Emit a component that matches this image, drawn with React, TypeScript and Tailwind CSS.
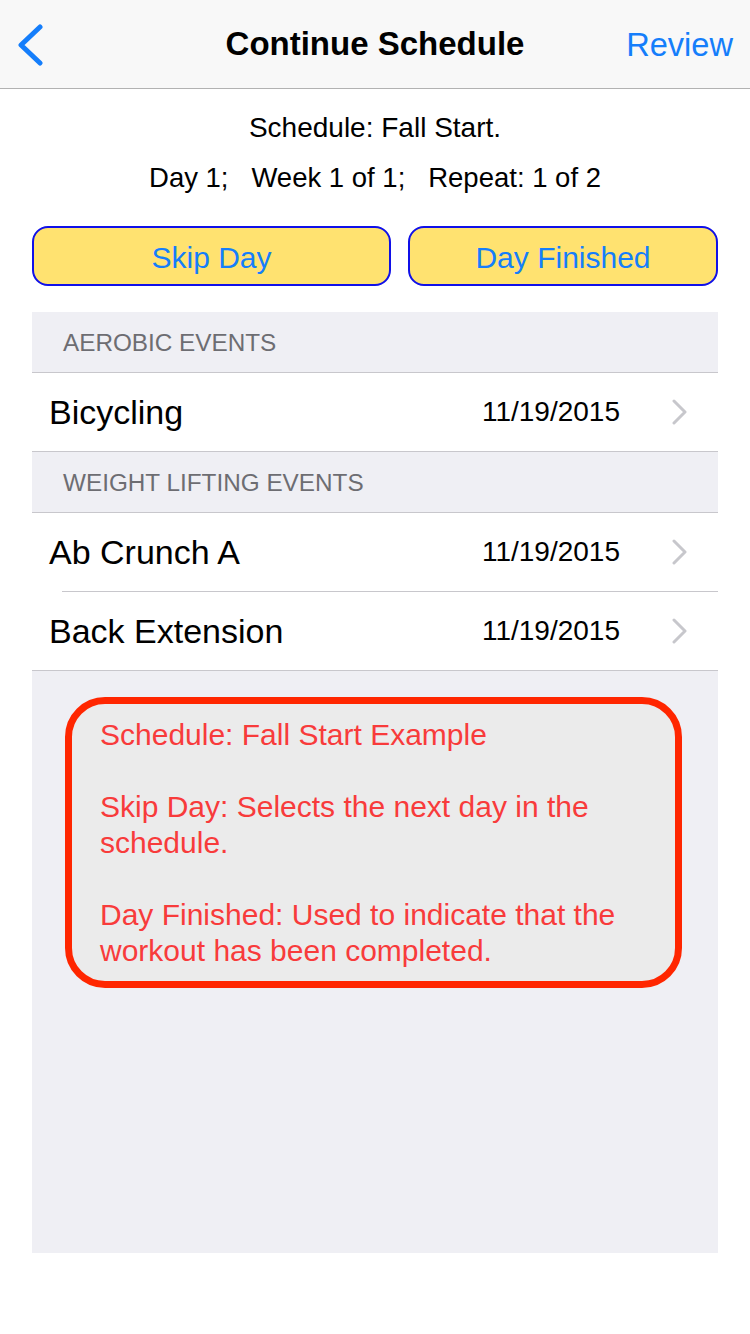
import React from "react";

const font = { fontFamily: '"Liberation Sans", Arial, sans-serif' };

function Chevron() {
  return (
    <svg width="16" height="26" viewBox="0 0 16 26" className="shrink-0">
      <path d="M2 2 L13 13 L2 24" fill="none" stroke="#c7c7cc" strokeWidth="3" strokeLinecap="round" strokeLinejoin="round" />
    </svg>
  );
}

function Row({ name, date, inset }: { name: string; date: string; inset?: boolean }) {
  return (
    <div className="bg-white">
      <div className="h-[78px] flex items-center pl-[17px] pr-[30px]">
        <span className="text-[34px] text-black flex-1">{name}</span>
        <span className="text-[28px] text-black mr-[52px]">{date}</span>
        <Chevron />
      </div>
      {inset ? <div className="ml-[30px] h-px bg-[#c8c7cc]" /> : null}
    </div>
  );
}

function Header({ title }: { title: string }) {
  return (
    <div className="h-[61px] flex items-center pt-[3px] pl-[31px] border-b border-[#c8c7cc]">
      <span className="text-[24.3px] text-[#6d6d72]">{title}</span>
    </div>
  );
}

export default function App() {
  return (
    <div className="w-[750px] h-[1334px] bg-white flex flex-col" style={font}>
      <div className="h-[89px] bg-[#f8f8f8] border-b border-[#b2b2b2] flex items-center relative">
        <svg width="30" height="42" viewBox="0 0 30 42" className="absolute left-[15px] top-[24px]">
          <path d="M25 3 L6 21 L25 39" fill="none" stroke="#157efb" strokeWidth="5" strokeLinecap="round" strokeLinejoin="round" />
        </svg>
        <div className="w-full text-center text-[33px] font-bold text-black">Continue Schedule</div>
        <span className="absolute right-[17px] top-[21px] text-[32.6px] text-[#157efb]">Review</span>
      </div>
      <div className="flex flex-col items-center pt-[22px]">
        <div className="text-[28px] text-black leading-[34px]">Schedule: Fall Start.</div>
        <div className="text-[27.5px] text-black leading-[34px] mt-[16px] whitespace-pre">Day 1;   Week 1 of 1;   Repeat: 1 of 2</div>
      </div>
      <div className="flex gap-[17px] px-[32px] mt-[31px]">
        <div className="w-[359px] h-[60px] rounded-[16px] border-2 border-[#1010e8] bg-[#ffe270] flex items-center justify-center pt-[3px] text-[30px] text-[#157efb]">Skip Day</div>
        <div className="w-[310px] h-[60px] rounded-[16px] border-2 border-[#1010e8] bg-[#ffe270] flex items-center justify-center pt-[3px] text-[30px] text-[#157efb]">Day Finished</div>
      </div>
      <div className="mx-[32px] mt-[26px] h-[941px] bg-[#efeff4] flex flex-col">
        <Header title="AEROBIC EVENTS" />
        <Row name="Bicycling" date="11/19/2015" />
        <div className="h-px bg-[#c8c7cc]" />
        <Header title="WEIGHT LIFTING EVENTS" />
        <Row name="Ab Crunch A" date="11/19/2015" inset />
        <Row name="Back Extension" date="11/19/2015" />
        <div className="h-px bg-[#c8c7cc]" />
        <div className="ml-[33px] mt-[26px] w-[617px] h-[291px] rounded-[40px] border-[7px] border-[#ff2600] bg-[#ebebeb] pl-[28px] pt-[13px] text-[30px] leading-[36px] text-[#f83b3b]">
          <div>Schedule: Fall Start Example</div>
          <div className="h-[36px]" />
          <div>Skip Day: Selects the next day in the<br />schedule.</div>
          <div className="h-[36px]" />
          <div>Day Finished: Used to indicate that the<br />workout has been completed.</div>
        </div>
      </div>
    </div>
  );
}
